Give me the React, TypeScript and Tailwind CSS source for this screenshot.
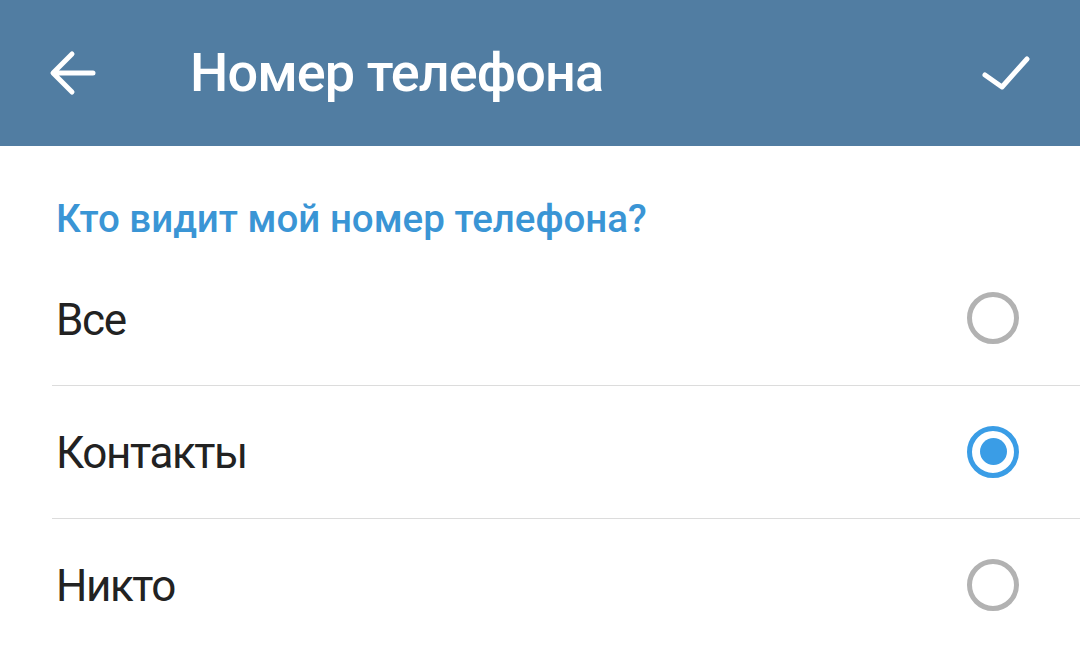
import React, { useState } from "react";

const options = ["Все", "Контакты", "Никто"];

function Radio({ checked }: { checked: boolean }) {
  return (
    <div
      className={`w-[52px] h-[52px] rounded-full border-[5px] flex items-center justify-center ${
        checked ? "border-[#3a9de6]" : "border-[#b2b2b2]"
      }`}
    >
      {checked && <div className="w-[27px] h-[27px] rounded-full bg-[#3a9de6]"></div>}
    </div>
  );
}

export default function App() {
  const [selected, setSelected] = useState(1);

  return (
    <div className="w-[1080px] h-[650px] bg-white overflow-hidden" style={{ fontFamily: "Roboto, 'Noto Sans', sans-serif" }}>
      <div className="h-[146px] bg-[#517da2] flex items-center">
        <div className="w-[190px] pl-[48px] flex items-center">
          <svg width="48" height="48" viewBox="0 0 48 48" fill="none" stroke="white" strokeWidth="5" strokeLinecap="round" strokeLinejoin="round">
            <path d="M45 24H6M24 5L5 24L24 43" />
          </svg>
        </div>
        <h1 className="flex-1 text-white text-[54px] font-medium leading-none tracking-[-0.9px]">Номер телефона</h1>
        <div className="w-[104px] flex items-center">
          <svg width="60" height="60" viewBox="0 0 60 60" fill="none" stroke="white" strokeWidth="5" strokeLinecap="round" strokeLinejoin="round">
            <path d="M9 32L26 44L51 16" />
          </svg>
        </div>
      </div>

      <div className="pl-[56px] pt-[54px] pb-[13px]">
        <h2 className="text-[38.5px] font-medium leading-none text-[#3a95d5]">Кто видит мой номер телефона?</h2>
      </div>

      <div className="ml-[52px]">
        {options.map((label, i) => (
          <div
            key={label}
            onClick={() => setSelected(i)}
            className={`h-[133px] flex items-center justify-between pr-[61px] ${i > 0 ? "border-t border-[#dcdcdc]" : ""}`}
          >
            <span className="pl-[4px] pt-[3px] text-[44px] leading-none tracking-[-1.4px] text-[#222222]">{label}</span>
            <Radio checked={selected === i} />
          </div>
        ))}
      </div>
    </div>
  );
}
